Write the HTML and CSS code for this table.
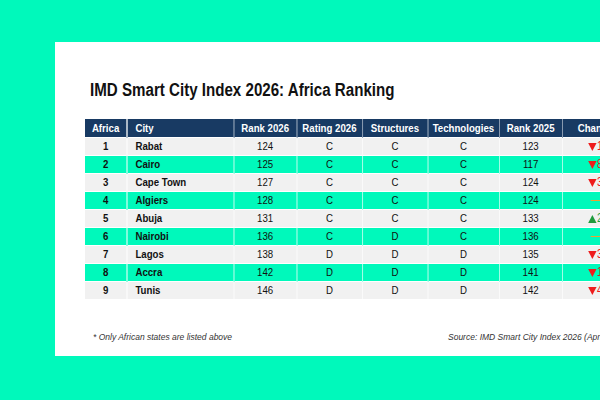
FILE: index.html
```html
<!DOCTYPE html>
<html lang="en">
<head>
<meta charset="utf-8">
<title>IMD Smart City Index 2026: Africa Ranking</title>
<link rel="stylesheet" href="styles.css">
</head>
<body>
<div class="card">
  <div class="narrow">
    <h1 class="title">IMD Smart City Index 2026: Africa Ranking</h1>
    <table class="rank">
      <colgroup>
        <col class="c-af"><col class="c-city"><col class="c-r26"><col class="c-rat"><col class="c-str"><col class="c-tech"><col class="c-r25"><col class="c-chg">
      </colgroup>
      <thead>
        <tr><th class="first">Africa</th><th class="left">City</th><th>Rank 2026</th><th>Rating 2026</th><th>Structures</th><th>Technologies</th><th>Rank 2025</th><th class="chg-h">Change</th></tr>
      </thead>
      <tbody>
        <tr class="g"><td class="b first">1</td><td class="b left">Rabat</td><td>124</td><td>C</td><td>C</td><td>C</td><td>123</td><td class="chg"><span class="down"></span><span class="n dn">1</span></td></tr>
        <tr class="m"><td class="b first">2</td><td class="b left">Cairo</td><td>125</td><td>C</td><td>C</td><td>C</td><td>117</td><td class="chg"><span class="down"></span><span class="n dn">8</span></td></tr>
        <tr class="g"><td class="b first">3</td><td class="b left">Cape Town</td><td>127</td><td>C</td><td>C</td><td>C</td><td>124</td><td class="chg"><span class="down"></span><span class="n dn">3</span></td></tr>
        <tr class="m"><td class="b first">4</td><td class="b left">Algiers</td><td>128</td><td>C</td><td>C</td><td>C</td><td>124</td><td class="chg"><span class="dash"></span></td></tr>
        <tr class="g"><td class="b first">5</td><td class="b left">Abuja</td><td>131</td><td>C</td><td>C</td><td>C</td><td>133</td><td class="chg"><span class="up"></span><span class="n upn">2</span></td></tr>
        <tr class="m"><td class="b first">6</td><td class="b left">Nairobi</td><td>136</td><td>C</td><td>D</td><td>C</td><td>136</td><td class="chg"><span class="dash"></span></td></tr>
        <tr class="g"><td class="b first">7</td><td class="b left">Lagos</td><td>138</td><td>D</td><td>D</td><td>D</td><td>135</td><td class="chg"><span class="down"></span><span class="n dn">3</span></td></tr>
        <tr class="m"><td class="b first">8</td><td class="b left">Accra</td><td>142</td><td>D</td><td>D</td><td>D</td><td>141</td><td class="chg"><span class="down"></span><span class="n dn">1</span></td></tr>
        <tr class="g"><td class="b first">9</td><td class="b left">Tunis</td><td>146</td><td>D</td><td>D</td><td>D</td><td>142</td><td class="chg"><span class="down"></span><span class="n dn">4</span></td></tr>
      </tbody>
    </table>
  </div>
  <div class="foot">
    <p class="note">* Only African states are listed above</p>
    <p class="src">Source: IMD Smart City Index 2026 (April 2026)</p>
  </div>
</div>
</body>
</html>
```
FILE: styles.css
```css
html, body {
  margin: 0;
  padding: 0;
  width: 600px;
  height: 400px;
  overflow: hidden;
  background: #00f9bb;
}
body {
  font-family: "Liberation Sans", Arial, sans-serif;
}
.card {
  margin: 42px 0 0 55px;
  width: 640px;
  height: 277px;
  padding-top: 37px;
  background: #ffffff;
}
/* Arial Narrow look: compress the title and table horizontally */
.narrow {
  margin-left: 30px;
  width: 720px;
  transform: scaleX(0.84);
  transform-origin: 0 0;
}
.title {
  margin: 0 0 18px 6px;
  font-size: 18px;
  line-height: 22px;
  font-weight: bold;
  color: #111;
}
.rank {
  border-collapse: collapse;
  table-layout: fixed;
  width: 697px;
  font-size: 11px;
  color: #111;
}
.c-af { width: 50px; }
.c-city { width: 127px; }
.c-r26 { width: 75px; }
.c-rat { width: 78px; }
.c-str { width: 78px; }
.c-tech { width: 85px; }
.c-r25 { width: 75px; }
.c-chg { width: 129px; }
.rank th {
  background: #183a63;
  color: #fff;
  font-weight: bold;
  font-size: 11.5px;
  height: 18px;
  padding: 0;
  text-align: center;
  border-left: 1px solid #9aa9bb;
  line-height: 18px;
  white-space: nowrap;
}
.rank th.first { border-left: none; }
.rank th.left { border-left: 2px solid #c8d0da; }
.rank th.left, .rank td.left { text-align: left; padding-left: 9px; }
.rank th.chg-h { text-align: left; padding-left: 18px; }
.rank td {
  height: 17px;
  padding: 0;
  text-align: center;
  line-height: 17px;
  font-size: 11.5px;
  border-top: 1px solid #ffffff;
  border-left: 1px solid rgba(255,255,255,0.7);
  white-space: nowrap;
}
.rank td.first { border-left: none; }
.rank td.left { border-left: 2px solid rgba(255,255,255,0.6); }
.rank tr.g td { background: #f1f1f1; }
.rank tr.m td { background: #00f9bb; }
.rank td.b { font-weight: bold; }
.rank td.chg { text-align: left; padding-left: 30px; }
.down {
  display: inline-block;
  width: 0;
  height: 0;
  border-left: 5px solid transparent;
  border-right: 5px solid transparent;
  border-top: 8px solid #ee1c1c;
  vertical-align: -1px;
}
.up {
  display: inline-block;
  width: 0;
  height: 0;
  border-left: 5px solid transparent;
  border-right: 5px solid transparent;
  border-bottom: 8px solid #1f9b3c;
  vertical-align: -1px;
}
.n { margin-left: 1px; font-size: 12.5px; }
.dn { color: #ee1c1c; }
.upn { color: #1f9b3c; }
.dash {
  display: inline-block;
  width: 19px;
  height: 1px;
  background: #f0a030;
  vertical-align: middle;
  margin-left: 3px;
}
.foot {
  display: flex;
  margin: 32px 0 0 38px;
  font-style: italic;
  font-size: 8.5px;
  line-height: 12px;
  color: #333;
}
.foot p { margin: 0; white-space: nowrap; }
.note { width: 355px; }
```
